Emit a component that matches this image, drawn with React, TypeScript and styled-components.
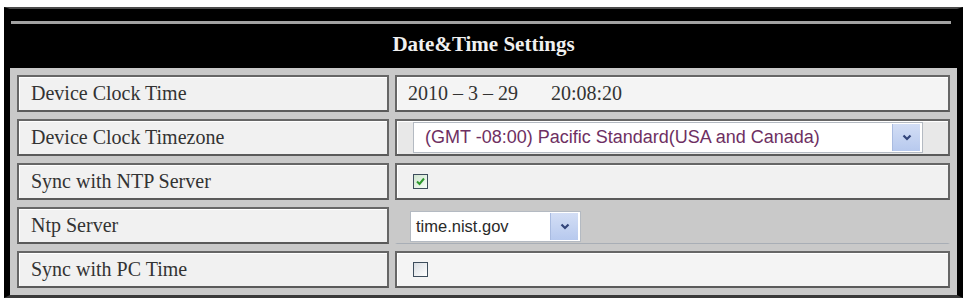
import React from 'react'
import styled, { createGlobalStyle } from 'styled-components'

const GlobalStyle = createGlobalStyle`
  html, body {
    margin: 0;
    padding: 0;
    background: #ffffff;
  }
  body {
    padding-top: 7px;
    font-family: "Liberation Serif", "Times New Roman", serif;
  }
`

const Panel = styled.div`
  box-sizing: border-box;
  width: 959px;
  margin-left: 4px;
  border-left: 6px solid #000;
  border-right: 6px solid #000;
  border-top: 2px solid #4a4a4a;
  border-bottom: 3px solid #3a3a3a;
  background: #c9c9c9;
`

const Header = styled.div`
  height: 59px;
  background: #000;
  display: flex;
  flex-direction: column;
  padding: 12px 0 3px;
  box-sizing: border-box;
`

const Rule = styled.div`
  height: 3px;
  margin: 0 6px 0 1px;
  background: #a2a2a2;
`

const Title = styled.div`
  flex: 1;
  display: flex;
  align-items: center;
  justify-content: center;
  color: #f0f0f0;
  font-size: 21px;
  font-weight: bold;
  font-family: "Liberation Serif", "Times New Roman", serif;
`

const Grid = styled.div`
  display: grid;
  grid-template-columns: 372px 1fr;
  grid-auto-rows: 37px;
  gap: 7px 6px;
  padding: 7px;
`

const Cell = styled.div<{ $bg?: string; $plain?: boolean }>`
  box-sizing: border-box;
  display: flex;
  align-items: center;
  border: 2px solid ${p => (p.$plain ? 'transparent' : '#666666')};
  border-bottom: ${p => (p.$plain ? '1px solid #a8aeb6' : '2px solid #5a5a5a')};
  background: ${p => p.$bg || '#f1f1f1'};
  box-shadow: ${p => (p.$plain ? 'none' : 'inset 1px 1px 0 #ffffff')};
`

const Label = styled(Cell)`
  padding-left: 12px;
  font-size: 20px;
  color: #333333;
`

const Value = styled(Cell)<{ $pad?: number }>`
  padding-left: ${p => p.$pad ?? 11}px;
  font-size: 20px;
  color: #333333;
`

const Time = styled.span`
  margin-left: 33px;
`

const SelectBox = styled.div<{ $width: number; $size: number; $color: string; $indent: number }>`
  box-sizing: border-box;
  width: ${p => p.$width}px;
  height: 31px;
  display: flex;
  align-items: center;
  justify-content: space-between;
  background: #ffffff;
  border: 1px solid #b4bac2;
  padding: 1px 2px 1px 0;
  font-family: "Liberation Sans", Arial, sans-serif;
  font-size: ${p => p.$size}px;
  color: ${p => p.$color};

  .text {
    padding-left: ${p => p.$indent}px;
    white-space: nowrap;
  }
`

const ArrowButton = styled.div`
  width: 27px;
  height: 100%;
  display: flex;
  align-items: center;
  justify-content: center;
  background: linear-gradient(#d3def5, #b7c9ee);
  border-left: 1px solid #a9bbe0;
`

const Box = styled.div<{ $checked?: boolean }>`
  box-sizing: border-box;
  width: 15px;
  height: 15px;
  border: 1px solid #3d4d5c;
  background: ${p =>
    p.$checked ? 'linear-gradient(135deg, #cfe3cf, #f6fff6)' : 'linear-gradient(135deg, #d9dde2, #ffffff)'};
  display: flex;
  align-items: center;
  justify-content: center;
`

const Chevron = () => (
  <svg width="10" height="7" viewBox="0 0 10 7">
    <polyline points="1.5,1.5 5,5 8.5,1.5" fill="none" stroke="#33457a" strokeWidth="2.2" />
  </svg>
)

interface SelectProps {
  value: string
  width: number
  size: number
  color: string
  indent: number
}

const Select = ({ value, width, size, color, indent }: SelectProps) => (
  <SelectBox $width={width} $size={size} $color={color} $indent={indent}>
    <span className="text">{value}</span>
    <ArrowButton>
      <Chevron />
    </ArrowButton>
  </SelectBox>
)

const Checkbox = ({ checked }: { checked?: boolean }) => (
  <Box $checked={checked}>
    {checked && (
      <svg width="11" height="11" viewBox="0 0 11 11">
        <polyline points="2,5.5 4.5,8 9,2.5" fill="none" stroke="#2e9a2e" strokeWidth="2" />
      </svg>
    )}
  </Box>
)

const App = () => (
  <>
    <GlobalStyle />
    <Panel>
      <Header>
        <Rule />
        <Title>Date&amp;Time Settings</Title>
      </Header>
      <Grid>
        <Label>Device Clock Time</Label>
        <Value $bg="#f4f4f4">
          2010 – 3 – 29<Time>20:08:20</Time>
        </Value>

        <Label>Device Clock Timezone</Label>
        <Value $bg="#e8e8e8" $pad={16}>
          <Select
            value="(GMT -08:00) Pacific Standard(USA and Canada)"
            width={510}
            size={18}
            color="#6e2f62"
            indent={11}
          />
        </Value>

        <Label>Sync with NTP Server</Label>
        <Value $bg="#f1f1f1" $pad={16}>
          <Checkbox checked />
        </Value>

        <Label>Ntp Server</Label>
        <Value $plain $bg="#c9c9c9" $pad={13}>
          <Select value="time.nist.gov" width={171} size={16.5} color="#2a2a2a" indent={5} />
        </Value>

        <Label>Sync with PC Time</Label>
        <Value $bg="#f4f4f4" $pad={16}>
          <Checkbox />
        </Value>
      </Grid>
    </Panel>
  </>
)

export default App
